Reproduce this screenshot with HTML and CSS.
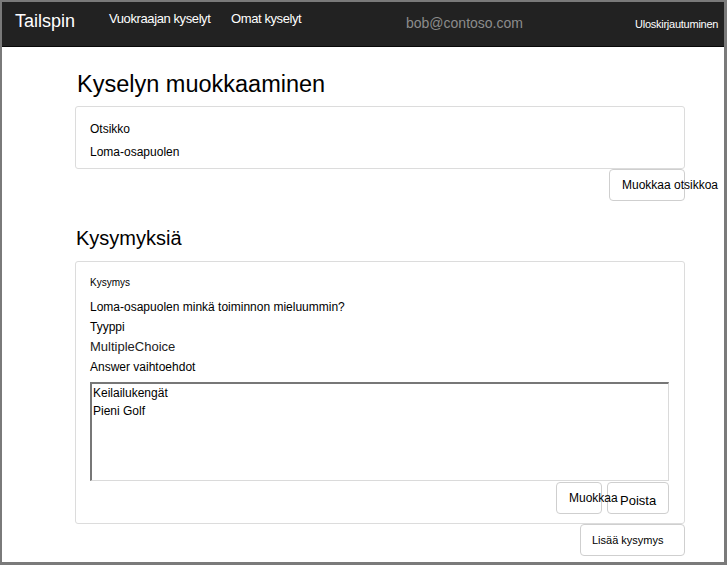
FILE: index.html
```html
<!DOCTYPE html>
<html lang="fi">
<head>
<meta charset="utf-8">
<title>Kyselyn muokkaaminen</title>
<link rel="stylesheet" href="styles.css">
</head>
<body>
<div class="frame">
  <nav class="navbar">
    <span class="brand">Tailspin</span>
    <span class="nav-link first">Vuokraajan kyselyt</span>
    <span class="nav-link second">Omat kyselyt</span>
    <span class="user">bob@contoso.com</span>
    <span class="logout">Uloskirjautuminen</span>
  </nav>
  <main class="content">
    <h1 class="title">Kyselyn muokkaaminen</h1>
    <section class="panel panel-title">
      <div class="label">Otsikko</div>
      <div class="value">Loma-osapuolen</div>
    </section>
    <div class="actions">
      <button class="btn">Muokkaa otsikkoa</button>
    </div>
    <h2 class="subtitle">Kysymyksiä</h2>
    <section class="panel panel-question">
      <div class="small-label">Kysymys</div>
      <div class="q-line">Loma-osapuolen minkä toiminnon mieluummin?</div>
      <div class="q-line">Tyyppi</div>
      <div class="q-line type">MultipleChoice</div>
      <div class="q-line">Answer vaihtoehdot</div>
      <div class="answers">
        <div>Keilailukengät</div>
        <div>Pieni Golf</div>
      </div>
      <div class="actions tight">
        <button class="btn btn-edit">Muokkaa</button>
        <button class="btn btn-delete">Poista</button>
      </div>
    </section>
    <div class="actions">
      <button class="btn btn-add">Lisää kysymys</button>
    </div>
  </main>
</div>
</body>
</html>
```

FILE: styles.css
```css
* { box-sizing: border-box; }

html, body {
  margin: 0;
  padding: 0;
  background: #fff;
}

body {
  font-family: "Liberation Sans", Arial, sans-serif;
  color: #111;
}

.frame {
  width: 727px;
  height: 565px;
  border-style: solid;
  border-color: #7a7a7a;
  border-width: 2px 3px 3px 2px;
  overflow: hidden;
  background: #fff;
}

.navbar {
  display: flex;
  align-items: flex-start;
  height: 45px;
  background: #222;
  border-bottom: 1px solid #080808;
  padding-left: 13px;
  white-space: nowrap;
}

.brand {
  width: 94px;
  font-size: 18px;
  line-height: 20px;
  padding-top: 9px;
  color: #fff;
}

.nav-link {
  font-size: 13px;
  line-height: 16px;
  padding-top: 9px;
  color: #fff;
  letter-spacing: -0.4px;
}

.nav-link.first { width: 122px; }
.nav-link.second { width: 175px; }

.user {
  width: 229px;
  font-size: 14px;
  line-height: 16px;
  padding-top: 13px;
  color: #8c8c8c;
}

.logout {
  font-size: 11px;
  line-height: 14px;
  padding-top: 15px;
  color: #fff;
  letter-spacing: -0.25px;
}

.content {
  padding-left: 73px;
  width: 683px;
}

.title {
  margin: 24px 0 9px 2px;
  font-size: 23.5px;
  line-height: 26px;
  font-weight: normal;
  color: #000;
}

.subtitle {
  margin: 26px 0 12px 1px;
  font-size: 20px;
  line-height: 22px;
  font-weight: normal;
  color: #000;
}

.panel {
  border: 1px solid #dcdcdc;
  border-radius: 3px;
  padding-left: 14px;
  padding-right: 15px;
}

.panel-title {
  padding-top: 12px;
  padding-bottom: 6px;
  display: flex;
  flex-direction: column;
  gap: 3px;
}

.label, .value {
  font-size: 12px;
  line-height: 20px;
  color: #000;
}

.actions {
  display: flex;
  justify-content: flex-end;
  gap: 5px;
}

.btn {
  height: 32px;
  width: 76px;
  padding: 0 0 0 12px;
  text-align: left;
  white-space: nowrap;
  overflow: visible;
  background: #fff;
  border: 1px solid #cfcfcf;
  border-radius: 4px;
  font-family: "Liberation Sans", Arial, sans-serif;
  font-size: 12px;
  color: #000;
}

.panel-question {
  padding-top: 11px;
  padding-bottom: 9px;
}

.small-label {
  font-size: 10px;
  line-height: 20px;
  margin-bottom: 4px;
  color: #000;
}

.q-line {
  font-size: 12px;
  line-height: 20px;
  color: #000;
}

.q-line.type {
  font-size: 13px;
  color: #222;
}

.answers {
  margin-top: 5px;
  height: 99px;
  border-style: solid;
  border-color: #777 #dadada #dadada #777;
  border-width: 2px 1px 1px 2px;
  padding: 0 1px;
  font-size: 12px;
  line-height: 18px;
  color: #000;
}

.actions.tight {
  margin-top: 1px;
}

.btn-edit {
  width: 46px;
  position: relative;
  z-index: 1;
  background: transparent;
}

.btn-delete {
  width: 62px;
  font-size: 13px;
  padding-top: 4px;
}

.btn-add {
  width: 105px;
  padding-left: 11px;
  font-size: 11px;
}
```
